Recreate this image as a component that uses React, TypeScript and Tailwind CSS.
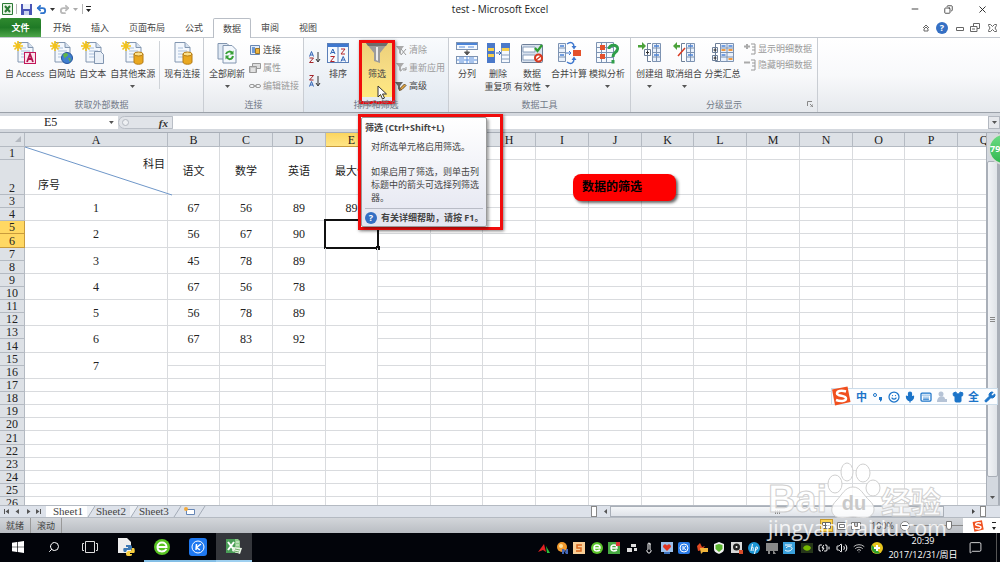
import React from 'react';
import {
  Mic,
  Smile,
  Keyboard,
  Shirt,
  Wrench,
  Search,
  Minus,
  Copy,
  X,
  Undo2,
  Redo2,
  Thermometer,
  Volume2,
  Wifi,
  MessageSquare,
  BatteryCharging,
} from 'lucide-react';

const ribbonTabs = ['开始', '插入', '页面布局', '公式', '数据', '审阅', '视图'];

const columns = [
  { name: 'A', width: 'w-[143px]' },
  { name: 'B', width: 'w-[52px]' },
  { name: 'C', width: 'w-[53px]' },
  { name: 'D', width: 'w-[53px]' },
  { name: 'E', width: 'w-[52px]' },
  { name: 'F', width: 'w-[53px]' },
  { name: 'G', width: 'w-[52px]' },
  { name: 'H', width: 'w-[53px]' },
  { name: 'I', width: 'w-[53px]' },
  { name: 'J', width: 'w-[53px]' },
  { name: 'K', width: 'w-[52px]' },
  { name: 'L', width: 'w-[53px]' },
  { name: 'M', width: 'w-[53px]' },
  { name: 'N', width: 'w-[53px]' },
  { name: 'O', width: 'w-[52px]' },
  { name: 'P', width: 'w-[53px]' },
  { name: 'Q', width: 'w-[53px]' },
];

// each score line covers two sheet rows, starting at row 3
const scores = [
  ['1', '67', '56', '89', '89'],
  ['2', '56', '67', '90', ''],
  ['3', '45', '78', '89', ''],
  ['4', '67', '56', '78', ''],
  ['5', '56', '78', '89', ''],
  ['6', '67', '83', '92', ''],
  ['7', '', '', '', ''],
];

const rowNumbers = Array.from({ length: 26 }, (_, i) => i + 1);

function Caret({ className = 'text-[#555]' }: { className?: string }) {
  return (
    <svg className={className} width="5" height="3" viewBox="0 0 5 3">
      <path d="M0 0h5L2.5 3z" fill="currentColor" />
    </svg>
  );
}

function Page() {
  return (
    <>
      <path d="M5 1.500h10l5 5V21H5z" fill="#f4f8fd" stroke="#8296b0" />
      <path d="M15 1.500v5h5" fill="#d5e1ef" stroke="#8296b0" />
      <path d="M8 7h5M8 10h9M8 13h9M8 16h9" stroke="#a9bfdc" />
    </>
  );
}

function Spark() {
  return (
    <path
      d="M5 0v10M0 5h10M1.500 1.500l7 7M8.500 1.500l-7 7"
      stroke="#f2c21b"
      strokeWidth="1.600"
    />
  );
}

function Drum() {
  return (
    <>
      <path d="M13 13v8c0 3 9 3 9 0v-8z" fill="#e9a820" stroke="#b57a12" />
      <ellipse cx="17.500" cy="13" rx="4.500" ry="2" fill="#fbe08a" stroke="#b57a12" />
    </>
  );
}

function Grid({ x, y, w, h }: { x: number; y: number; w: number; h: number }) {
  return (
    <path
      d={`M${x} ${y}h${w}v${h}h${-w}zM${x} ${y + h / 4}h${w}M${x} ${y + h / 2}h${w}M${x} ${y + (h * 3) / 4}h${w}M${x + w / 2} ${y}v${h}`}
      fill="#eaf1fb"
      stroke="#7d93b2"
    />
  );
}

function RibbonIcon({ name }: { name: string }) {
  return (
    <svg className="shrink-0" width="24" height="24" viewBox="0 0 24 24" fill="none">
      {name === 'access' && (
        <>
          <Page />
          <Spark />
          <rect x="11.500" y="11.500" width="11" height="11" fill="#fbe3ec" stroke="#c2185b" />
          <path d="M14 21l3-8 3 8M15 18h4" stroke="#b3124f" strokeWidth="1.800" />
        </>
      )}
      {name === 'web' && (
        <>
          <Page />
          <Spark />
          <circle cx="17" cy="17" r="5.500" fill="#3f7fd0" stroke="#24539a" />
          <path d="M13 14c2-3 5-2 5 0s-3 1-3 4zM18 17c3-1 3 1 2 4z" fill="#5fb548" />
        </>
      )}
      {name === 'text' && (
        <>
          <Page />
          <Spark />
          <path d="M13.500 10.500h6l3 3v9h-9z" fill="#e9eff7" stroke="#8296b0" />
        </>
      )}
      {name === 'other' && (
        <>
          <Page />
          <Spark />
          <Drum />
        </>
      )}
      {name === 'existing' && (
        <>
          <Page />
          <Drum />
        </>
      )}
      {name === 'refresh' && (
        <>
          <path d="M3 2.500h9l3 3V18H3z" fill="#dfe8f3" stroke="#8296b0" />
          <path d="M8 4.500h9l4 4V22H8z" fill="#f4f8fd" stroke="#8296b0" />
          <path d="M11 13c1-3 5-3 6-1M18 15c-1 4-5 4-6 1" stroke="#38a036" strokeWidth="2" />
          <path d="M18.500 9.500v4h-4zM10.500 18.500v-4h4z" fill="#38a036" />
        </>
      )}
      {name === 'sort' && (
        <>
          <rect x="1.500" y="2.500" width="21" height="19" fill="#f5f9fe" stroke="#5a7fb8" />
          <path d="M2 3h20v3H2z" fill="#3f78cf" />
          <path d="M12 6v15" stroke="#5a7fb8" />
          <path d="M4.500 13l2.300-5 2.200 5M5.500 11.500h3M15 20.500l2.200-5 2.300 5M15.500 19h3" stroke="#2e62b5" />
          <path d="M4.500 15.500h4l-4 5h4M15 8h4l-4 5h4" stroke="#b3262b" />
        </>
      )}
      {name === 'filter' && (
        <>
          <path d="M1 2h22l-8 10v10l-6-2v-8z" fill="#9b9b9b" />
          <path d="M1 2h22l-2 3H3z" fill="#6d6d6d" />
          <path d="M11 6h2v14l-2-1z" fill="#ececec" />
        </>
      )}
      {name === 'split' && (
        <>
          <rect x="1.500" y="1.500" width="21" height="7" fill="#f5f9fe" stroke="#7d93b2" />
          <path d="M2 2h20v2H2z" fill="#4b83d6" />
          <path d="M4 6h6M13 6h6" stroke="#5b8fdd" />
          <path d="M12 9v3M9.500 11h5L12 14z" fill="#555" stroke="#555" />
          <rect x="1.500" y="15.500" width="21" height="7" fill="#f5f9fe" stroke="#7d93b2" />
          <path d="M12 15v8M2 19h20M4 17h5M14 17h5M4 21h5M14 21h5" stroke="#5b8fdd" />
        </>
      )}
      {name === 'dedupe' && (
        <>
          <path d="M1 2h8v20H1z" fill="#4b79c9" />
          <path d="M2 7h6v3H2zM2 13h6v3H2z" fill="#f7cf4c" />
          <path d="M10 12h5M13 10l2 2-2 2" stroke="#2e62b5" />
          <rect x="15.500" y="2.500" width="8" height="19" fill="#f5f9fe" stroke="#8aa0bd" />
          <path d="M15 2h9v5h-9z" fill="#4b79c9" />
          <path d="M16 7h7v3h-7z" fill="#f7cf4c" />
          <path d="M16 14h7M16 18h7" stroke="#8aa0bd" />
        </>
      )}
      {name === 'validate' && (
        <>
          <rect x="1.500" y="3.500" width="21" height="18" rx="1" fill="#d7e0ec" stroke="#6d7f98" />
          <path d="M3 6h12v5H3zM3 14h12v5H3z" fill="#fff" stroke="#8aa0bd" />
          <path d="M15 7l2.500 3L22 4" stroke="#2f9e2f" strokeWidth="2.200" />
          <circle cx="18.500" cy="17" r="3.500" fill="#fff" stroke="#d9391f" strokeWidth="2" />
          <path d="M16 19l5-4" stroke="#d9391f" strokeWidth="1.500" />
        </>
      )}
      {name === 'consolidate' && (
        <>
          <path d="M1.500 2.500h7v18h-7zM1.500 7h7M1.500 11.500h7M1.500 16h7" fill="#eaf1fb" stroke="#7d93b2" />
          <path d="M3 5h4M3 14h4" stroke="#4b83d6" strokeWidth="1.500" />
          <path d="M9 12h5M12 10l2 2-2 2" stroke="#3f78cf" />
          <path d="M16 9h8v6h-8z" fill="#e4512b" />
          <path d="M10 3c4-3 7-1 7 3M10 21c4 3 7 1 7-3" stroke="#3f78cf" strokeWidth="1.500" />
          <path d="M14.500 5h5L17 8.500zM14.500 19h5L17 15.500z" fill="#3f78cf" />
        </>
      )}
      {name === 'whatif' && (
        <>
          <path d="M1.500 1.500h17v20h-17zM1.500 6.500h17M1.500 11.500h17M1.500 16.500h17M6.500 1.500v20M11.500 1.500v20" fill="#f5f9fe" stroke="#7d93b2" />
          <path d="M5 4h5v5H5zM5 13h5v5H5z" fill="#e4512b" />
          <path d="M14 8c0-5 9-5 8.500 0-.5 4-4.500 3-4.500 8M18 19v3.500" stroke="#2f9e4a" strokeWidth="3" />
        </>
      )}
      {name === 'group' && (
        <>
          <Grid x={14.5} y={2.5} w={8} h={18} />
          <path d="M16 5h5M16 14h5" stroke="#4b83d6" strokeWidth="1.500" />
          <path d="M13 2.500H9.500v18H13M6.500 8.500h6v6h-6z" fill="#fff" stroke="#6d7f98" />
          <path d="M8 11.500h3M9.500 10v3" stroke="#333" />
          <path d="M0 4h4V1l4 4-4 4V6.500H0z" fill="#4ba23a" />
        </>
      )}
      {name === 'ungroup' && (
        <>
          <Grid x={14.5} y={2.5} w={8} h={18} />
          <path d="M16 5h5M16 14h5" stroke="#4b83d6" strokeWidth="1.500" />
          <path d="M13 2.500H9.500v18H13" stroke="#6d7f98" />
          <path d="M6 15l7-8" stroke="#d9391f" strokeWidth="1.500" />
          <path d="M8 4H5V1L1 5l4 4V6.500h3z" fill="#4ba23a" />
        </>
      )}
      {name === 'subtotal' && (
        <>
          <Grid x={9.5} y={2.5} w={13} h={18} />
          <path d="M10.500 5h4M17.500 5h4M10.500 14h4" stroke="#4b83d6" strokeWidth="1.500" />
          <path d="M10.500 9h4M17.500 9h4M17.500 18h4" stroke="#f09a3e" strokeWidth="2" />
          <path d="M9 2.500H4.500v18H9M1.500 6.500h5v5h-5zM1.500 14.500h5v5h-5z" fill="#fff" stroke="#6d7f98" />
          <path d="M2.500 9h3M4 7.500v3M2.500 17h3M4 15.500v3" stroke="#333" />
        </>
      )}
    </svg>
  );
}

interface IBigButtonProps {
  icon: string;
  label: string;
  second?: string;
  arrow?: boolean;
  className?: string;
}

function BigButton({ icon, label, second, arrow, className = '' }: IBigButtonProps) {
  return (
    <button
      type="button"
      className={`flex shrink-0 flex-col items-center px-[2px] whitespace-nowrap ${className}`}
    >
      <RibbonIcon name={icon} />
      <span className="mt-[2px] leading-[13px]">{label}</span>
      <span className="flex h-[13px] items-center gap-1 leading-[13px]">
        {second}
        {arrow && <Caret />}
      </span>
    </button>
  );
}

function SmallIcon({ name }: { name: string }) {
  return (
    <svg className="shrink-0" width="12" height="12" viewBox="0 0 12 12" fill="none">
      {name === 'link' && (
        <>
          <path d="M1.500 1.500h9v9h-9z" fill="#e4edf8" stroke="#6787b3" />
          <path d="M3 3h3v6H3z" fill="#6f9ad6" />
          <path d="M6.500 4.500h4v5h-4z" fill="#f0b43c" stroke="#9f7625" />
        </>
      )}
      {name === 'props' && (
        <>
          <path d="M3.500 1.500h8v5h-8z" fill="#ddd" stroke="#999" />
          <path d="M.5 4.500h7v6h-7z" fill="#c4c4c4" stroke="#999" />
          <path d="M2 7h4M2 9h4" stroke="#fff" />
        </>
      )}
      {name === 'chain' && (
        <>
          <rect x=".5" y="4.500" width="5" height="3" rx="1.500" stroke="#999" />
          <rect x="6.500" y="4.500" width="5" height="3" rx="1.500" stroke="#999" />
          <path d="M4 6h4" stroke="#999" />
        </>
      )}
      {name === 'clear' && (
        <>
          <path d="M1 2h8L6 6v5L4 9V6z" fill="#aaa" />
          <path d="M6 5l5 6M11 5l-5 6" stroke="#999" />
        </>
      )}
      {name === 'reapply' && (
        <>
          <path d="M1 1h8L6 5v5L4 8V5z" fill="#aaa" />
          <path d="M6 9c1-3 4-3 5-1M11 5v3H8" stroke="#999" />
        </>
      )}
      {name === 'advanced' && (
        <>
          <path d="M0 2h8L5 6v5L3 9V6z" fill="#666" />
          <path d="M4.500 10.500l1-2.500 4-4 1.500 1.500-4 4z" fill="#e9a83d" stroke="#6b5330" />
        </>
      )}
      {name === 'show' && (
        <>
          <path d="M0 3.500h6M3 1v5" stroke="#aaa" strokeWidth="2" />
          <path d="M7 1h4v10H7M8 4h3M8 7h3" stroke="#999" />
        </>
      )}
      {name === 'hide' && (
        <>
          <path d="M0 3.500h6" stroke="#aaa" strokeWidth="2" />
          <path d="M7 1h4v10H7M8 4h3M8 7h3" stroke="#999" />
        </>
      )}
      {(name === 'asc' || name === 'desc') && (
        <>
          <path
            d={name === 'asc' ? 'M.5 5.500L2.500.500l2 5M1.200 4h2.600' : 'M.5 11.500l2-5 2 5M1.200 10h2.600'}
            stroke="#2e62b5"
          />
          <path d={name === 'asc' ? 'M.5 7h4l-4 4.500h4' : 'M.5.500h4L.5 5h4'} stroke="#a3262b" />
          <path d="M9 1v9M7 8l2 3 2-3" stroke="#333" />
        </>
      )}
    </svg>
  );
}

interface ISmallButtonProps {
  icon: string;
  label: string;
  disabled?: boolean;
  dense?: boolean;
}

function SmallButton({ icon, label, disabled, dense }: ISmallButtonProps) {
  return (
    <button
      type="button"
      disabled={disabled}
      className={`flex items-center gap-[2px] whitespace-nowrap disabled:text-[#9a9a9a] ${
        dense ? 'h-4' : 'h-[18px]'
      }`}
    >
      <SmallIcon name={icon} />
      {label}
    </button>
  );
}

interface IGroupProps {
  label: string;
  className: string;
  children: React.ReactNode;
  launcher?: boolean;
}

function Group({ label, className, children, launcher }: IGroupProps) {
  return (
    <section
      className={`flex shrink-0 flex-col justify-between border-r border-[#c9cdd3] ${className}`}
    >
      <div className="flex items-start pt-[3px]">{children}</div>
      <div className="relative h-[14px] text-center leading-[13px] text-[#737b88]">
        {label}
        {launcher && (
          <svg className="absolute top-[3px] right-1" width="6" height="6" viewBox="0 0 6 6">
            <path d="M.5 5V.5H5M3 3l3 3M6 3v3H3" fill="none" stroke="#888" />
          </svg>
        )}
      </div>
    </section>
  );
}

function TitleBar() {
  return (
    <header className="relative flex h-[18px] shrink-0 items-center bg-white">
      <div className="flex items-center gap-[3px] pl-[2px]">
        <svg width="11" height="12" viewBox="0 0 11 12">
          <path d="M.5.500h10v11H.5z" fill="#e7f3e4" stroke="#2b7a35" />
          <path d="M3 3l5 6M8 3L3 9" stroke="#2b7a35" strokeWidth="2" />
        </svg>
        <span className="h-[10px] w-px bg-[#b5b5b5]" />
        <button type="button" aria-label="保存" className="ml-px">
          <svg width="11" height="11" viewBox="0 0 11 11">
            <path d="M0 0h11v11H0z" fill="#4a55b5" />
            <path d="M2 0h7v5H2z" fill="#e9effa" />
            <path d="M3 7h5v4H3z" fill="#cbd3ee" />
          </svg>
        </button>
        <button type="button" aria-label="撤消" className="ml-px flex items-center gap-[3px]">
          <Undo2 className="h-[11px] w-[11px] text-[#2f74cc]" strokeWidth={4} />
          <Caret className="text-[#333]" />
        </button>
        <button type="button" aria-label="恢复" className="ml-px flex items-center gap-[3px]">
          <Redo2 className="h-[11px] w-[11px] text-[#b9b9b9]" strokeWidth={4} />
          <Caret className="text-[#aaa]" />
        </button>
        <span className="ml-px h-[10px] w-px bg-[#b5b5b5]" />
        <svg className="text-[#222]" width="5" height="6" viewBox="0 0 5 6" fill="currentColor">
          <path d="M0 0h5v1H0zM0 3h5L2.500 6z" />
        </svg>
      </div>
      <h1 className="absolute inset-x-0 text-center text-[10px] leading-[18px] text-[#222]">
        test - Microsoft Excel
      </h1>
      <div className="relative ml-auto flex items-center gap-6 pr-3 text-[#222]">
        <button type="button" aria-label="最小化">
          <Minus className="h-[10px] w-[10px]" />
        </button>
        <button type="button" aria-label="还原">
          <Copy className="h-[9px] w-[9px] -scale-x-100" />
        </button>
        <button type="button" aria-label="关闭">
          <X className="h-[11px] w-[11px]" />
        </button>
      </div>
    </header>
  );
}

function TabStrip() {
  return (
    <nav className="flex h-5 shrink-0 items-stretch border-b border-[#c3c8cf] bg-white text-[9px]">
      <button
        type="button"
        className="mr-[2px] w-[41px] rounded-t-[2px] bg-linear-to-b from-[#2f8a2f] via-[#1f7a26] to-[#4da64a] font-semibold text-white"
      >
        文件
      </button>
      {ribbonTabs.map((tab) => (
        <button
          type="button"
          key={tab}
          className={
            tab === '数据'
              ? '-mb-px rounded-t-[2px] border border-b-0 border-[#b9bec6] bg-white px-[9px] text-[#444]'
              : 'px-[10px] text-[#444]'
          }
        >
          {tab}
        </button>
      ))}
      <div className="ml-auto flex items-center gap-[6px] pr-[3px] text-[#666]">
        <svg width="8" height="8" viewBox="0 0 8 8" fill="none" stroke="currentColor">
          <path d="M1 4l3-3 3 3M2 7V5l2-2 2 2v2z" />
        </svg>
        <span className="flex h-3 w-3 items-center justify-center rounded-full bg-[#3570c4] text-[9px] leading-3 font-bold text-white">
          ?
        </span>
        <svg className="ml-[2px]" width="8" height="8" viewBox="0 0 8 8" fill="none" stroke="currentColor">
          <path d="M.5 3.500h7v3h-7z" />
        </svg>
        <svg width="10" height="9" viewBox="0 0 10 9" fill="none" stroke="currentColor">
          <path d="M3.500 3V.500h6v5H7M.5 3.500H7v5H.5zM2 6h3" />
        </svg>
        <svg className="ml-[2px]" width="9" height="8" viewBox="0 0 9 8" fill="none" stroke="currentColor">
          <path d="M.5.500h2l2 2 2-2h2v1L7 4l1.500 2.500v1h-2l-2-2-2 2h-2v-1L2 4 .5 1.500z" />
        </svg>
      </div>
    </nav>
  );
}

function Ribbon() {
  return (
    <div className="flex h-[75px] shrink-0 border-b border-[#9ba1a9] bg-linear-to-b from-white via-[#f8f9fb] to-[#e6e9ed] text-[9px] text-[#444]">
      <Group label="获取外部数据" className="w-[204px]">
        <div className="flex items-start pl-[3px]">
          <BigButton icon="access" label="自 Access" />
          <BigButton icon="web" label="自网站" />
          <BigButton icon="text" label="自文本" />
          <BigButton icon="other" label="自其他来源" arrow />
          <span className="mx-[2px] h-12 w-px bg-[#cfd3d8]" />
          <BigButton icon="existing" label="现有连接" />
        </div>
      </Group>
      <Group label="连接" className="w-[100px]">
        <BigButton icon="refresh" label="全部刷新" arrow className="ml-[3px]" />
        <div className="ml-[2px] flex flex-col">
          <SmallButton icon="link" label="连接" />
          <SmallButton icon="props" label="属性" disabled />
          <SmallButton icon="chain" label="编辑链接" disabled />
        </div>
      </Group>
      <Group label="排序和筛选" className="w-[145px] bg-linear-to-b from-[#f9fbfd] to-[#e0e7ef]">
        <div className="flex flex-col gap-3 pt-[10px] pl-[5px]">
          <button type="button" aria-label="升序" className="h-3">
            <SmallIcon name="asc" />
          </button>
          <button type="button" aria-label="降序" className="h-3">
            <SmallIcon name="desc" />
          </button>
        </div>
        <BigButton icon="sort" label="排序" className="ml-[3px] w-7" />
        <div className="relative ml-[9px] h-14 w-8 bg-linear-to-b from-[#eccf78] via-[#f6dc85] to-[#ffe97f]">
          <BigButton icon="filter" label="筛选" className="w-full" />
          <span className="absolute -inset-x-[2px] -top-px h-[64px] border-[3px] border-[#f10c0c] shadow-[1px_1px_3px_rgba(0,0,0,0.5)]" />
          <svg className="absolute top-11 left-4" width="11" height="16" viewBox="0 0 11 16">
            <path d="M1 1v11l2.500-2.500L5.500 14l2-1-2-4H9.500z" fill="#fff" stroke="#333" />
          </svg>
        </div>
        <div className="ml-[2px] flex flex-col">
          <SmallButton icon="clear" label="清除" disabled />
          <SmallButton icon="reapply" label="重新应用" disabled />
          <SmallButton icon="advanced" label="高级" />
        </div>
      </Group>
      <Group label="数据工具" className="w-[182px]">
        <div className="flex items-start pl-1">
          <BigButton icon="split" label="分列" className="w-7" />
          <BigButton icon="dedupe" label="删除" second="重复项" className="w-[34px]" />
          <BigButton icon="validate" label="数据" second="有效性" arrow className="w-[34px]" />
          <BigButton icon="consolidate" label="合并计算" />
          <BigButton icon="whatif" label="模拟分析" arrow className="w-9" />
        </div>
      </Group>
      <Group label="分级显示" className="w-[187px]" launcher>
        <div className="flex items-start pl-[3px]">
          <BigButton icon="group" label="创建组" arrow />
          <BigButton icon="ungroup" label="取消组合" arrow className="w-[38px]" />
          <BigButton icon="subtotal" label="分类汇总" className="w-[39px]" />
        </div>
        <div className="ml-[2px] flex flex-col">
          <SmallButton icon="show" label="显示明细数据" disabled dense />
          <SmallButton icon="hide" label="隐藏明细数据" disabled dense />
        </div>
      </Group>
    </div>
  );
}

function FormulaBar() {
  return (
    <div className="flex h-5 shrink-0 items-stretch border-b border-[#a7adb6] bg-[#d5d9df] py-[3px]">
      <div className="flex w-[118px] items-center bg-white pr-1">
        <input
          aria-label="名称框"
          defaultValue="E5"
          className="w-full min-w-0 bg-transparent pr-2 text-center font-['Liberation_Serif',serif] text-[12px] leading-[13px] text-[#222]"
        />
        <Caret />
      </div>
      <div className="flex w-[55px] items-center justify-between rounded-l-full border border-[#b9bec6] bg-[#e1e4e9] pr-1 pl-[3px]">
        <span className="h-[7px] w-[7px] rounded-full border border-[#b3b8c0] bg-[#eef0f3]" />
        <span className="font-['Liberation_Serif',serif] text-[11px] leading-[12px] font-bold text-[#333] italic">
          fx
        </span>
      </div>
      <input aria-label="编辑栏" className="min-w-0 flex-1 bg-white" />
      <button
        type="button"
        aria-label="展开编辑栏"
        className="flex w-3 items-center justify-center border border-[#b3b8c0] bg-[#e6e8ec]"
      >
        <Caret />
      </button>
    </div>
  );
}

function HeadCell() {
  return (
    <td rowSpan={2} className="relative border-r border-b border-[#d9dbde] p-0 text-[11px]">
      <div className="flex h-[46px] flex-col justify-between pr-[2px] pl-[13px]">
        <span className="mt-[9px] self-end leading-[14px]">科目</span>
        <span className="mb-[2px] self-start leading-[14px]">序号</span>
      </div>
      <svg className="absolute top-0 left-0 overflow-visible" width="143" height="48" fill="none">
        <path d="M0 0l147 48" stroke="#6f97c9" />
      </svg>
    </td>
  );
}

function Cell({ row, col }: { row: number; col: number }) {
  const line = 'border-r border-b border-[#d9dbde] p-0';
  if (col < 5 && row <= 2) {
    if (row === 2) return null;
    if (col === 0) return <HeadCell />;
    return (
      <td rowSpan={2} className={`${line} text-[11px]`}>
        {['', '语文', '数学', '英语', '最大值'][col]}
      </td>
    );
  }
  const merged = col < 5 && row <= 16 && !(row >= 15 && col >= 1 && col <= 3);
  if (!merged) return <td className={line} />;
  if (row % 2 === 0) return null;
  return (
    <td rowSpan={2} className={`relative ${line}`}>
      {scores[(row - 3) / 2][col]}
      {row === 5 && col === 4 && (
        <span className="absolute -inset-[2px] border-2 border-[#111]">
          <span className="absolute -right-[3px] -bottom-[3px] h-1 w-1 bg-[#111]" />
        </span>
      )}
    </td>
  );
}

function rowHeight(row: number) {
  if (row === 2) return 'h-[35px]';
  return row === 6 || row === 14 || row === 21 ? 'h-[14px]' : 'h-[13px]';
}

function Sheet() {
  return (
    <main className="flex min-h-0 flex-1 bg-white">
      <div className="min-w-0 flex-1 overflow-hidden">
        <table className="w-[1010px] table-fixed border-separate border-spacing-0 text-center font-['Liberation_Serif','Noto_Sans_CJK_SC',serif] text-[12px] leading-[12px] text-[#222]">
          <thead>
            <tr className="h-[14px]">
              <th className="w-[25px] border-r border-b border-[#b4bac2] bg-[#dde1e6] p-0">
                <svg className="ml-auto" width="10" height="9" viewBox="0 0 10 9">
                  <path d="M7 1v6H1z" fill="#b3b8bf" />
                </svg>
              </th>
              {columns.map((c) => (
                <th
                  key={c.name}
                  className={`${c.width} border-r border-b p-0 font-normal ${
                    c.name === 'E'
                      ? 'border-[#c89b3c] bg-linear-to-b from-[#fbd55f] to-[#ffe585]'
                      : 'border-[#b4bac2] bg-[#dde1e6]'
                  }`}
                >
                  {c.name}
                </th>
              ))}
            </tr>
          </thead>
          <tbody>
            {rowNumbers.map((row) => (
              <tr key={row} className={rowHeight(row)}>
                <th
                  className={`border-r border-b p-0 align-bottom font-normal ${
                    row === 5 || row === 6
                      ? 'border-[#c89b3c] bg-[#ffd863]'
                      : 'border-[#b4bac2] bg-[#dde1e6]'
                  }`}
                >
                  {row}
                </th>
                {columns.map((c, col) => (
                  <Cell key={c.name} row={row} col={col} />
                ))}
              </tr>
            ))}
          </tbody>
        </table>
      </div>
      <div className="flex w-[14px] shrink-0 flex-col border-r-2 border-l border-[#a9afb8] bg-[#d3d8df]">
        <span className="h-4 shrink-0" />
        <span className="flex h-3 items-center justify-center text-[#666]">
          <Caret className="rotate-180" />
        </span>
        <span className="flex flex-1 flex-col items-center justify-center gap-px rounded-[2px] border border-[#a9afb8] bg-linear-to-r from-[#f1f3f6] to-[#dfe3e8]">
          <span className="h-px w-[5px] bg-[#888]" />
          <span className="h-px w-[5px] bg-[#888]" />
          <span className="h-px w-[5px] bg-[#888]" />
        </span>
        <span className="flex h-7 items-center justify-center pt-3">
          <Caret />
        </span>
      </div>
    </main>
  );
}

function SheetTabs() {
  return (
    <div className="flex h-[13px] shrink-0 items-stretch border-y border-[#b4bac2] bg-[#dde2ea] font-['Liberation_Serif',serif] text-[11px] leading-[11px] text-[#444]">
      <svg className="w-[46px] shrink-0" viewBox="0 0 46 11" fill="#555">
        <path d="M4 3h1v5H4zM9 3v5L5.500 5.500zM19 3v5l-3.500-2.500zM27 3v5l3.500-2.500zM36 3v5l3.500-2.500zM40 3h1v5h-1z" />
      </svg>
      <button type="button" className="bg-white pr-1 pl-[7px]">
        Sheet1
      </button>
      {['Sheet2', 'Sheet3'].map((name) => (
        <button type="button" key={name} className="flex">
          <svg width="9" height="11" viewBox="0 0 9 11">
            <path d="M0 0h9L1 11H0z" fill="#fff" opacity=".5" />
            <path d="M8 0L1 11" stroke="#a3abb7" />
          </svg>
          <span className="pr-1">{name}</span>
        </button>
      ))}
      <button type="button" aria-label="插入工作表" className="flex">
        <svg width="34" height="11" viewBox="0 0 34 11" fill="none">
          <path d="M8 0L1 11M32 0l-7 11" stroke="#a3abb7" />
          <path d="M13.500 3.500h8v5h-8z" fill="#fff" stroke="#6686b5" />
          <circle cx="13" cy="3" r="2" fill="#f2a93b" />
        </svg>
      </button>
      <div className="ml-auto flex w-[409px] items-center">
        <span className="h-[11px] w-[6px] border border-[#888] bg-white" />
        <span className="ml-[6px] text-[#555]">
          <Caret className="rotate-90" />
        </span>
        <span className="ml-[2px] flex h-[11px] w-[334px] items-center justify-center gap-px border border-[#a9afb8] bg-linear-to-b from-[#f4f6f8] to-[#dfe3e9]">
          <span className="h-1 w-px bg-[#888]" />
          <span className="h-1 w-px bg-[#888]" />
          <span className="h-1 w-px bg-[#888]" />
        </span>
        <span className="ml-[27px] text-[#444]">
          <Caret className="-rotate-90" />
        </span>
        <span className="ml-1 h-[11px] w-[6px] border border-[#888] bg-white" />
      </div>
    </div>
  );
}

function StatusBar() {
  return (
    <footer className="relative flex h-[15px] shrink-0 items-center bg-linear-to-b from-[#d3d6da] to-[#b9bdc3] text-[9px] leading-[15px] text-[#444]">
      <span className="border-r border-[#999] px-[6px]">就绪</span>
      <span className="border-r border-[#999] px-[6px]">滚动</span>
      <div className="ml-auto flex items-center pr-[14px]">
        <button type="button" aria-label="普通" className="flex h-[13px] w-[13px] items-center justify-center border border-[#c79a2c] bg-[#fbd34f]">
          <svg width="9" height="7" viewBox="0 0 9 7" fill="#fff" stroke="#666">
            <path d="M.5.500h8v6h-8zM.5 3.500h8M3.500.500v6" />
          </svg>
        </button>
        <button type="button" aria-label="页面布局" className="ml-1">
          <svg width="10" height="8" viewBox="0 0 10 8" fill="#fff" stroke="#777">
            <path d="M.5.500h9v7h-9zM2.500 2.500h5v3h-5z" />
          </svg>
        </button>
        <button type="button" aria-label="分页预览" className="ml-1">
          <svg width="10" height="8" viewBox="0 0 10 8" fill="#fff" stroke="#777">
            <path d="M.5.500h9v7h-9zM3.500.500v4h3v-4" />
          </svg>
        </button>
        <span className="ml-[10px]">100%</span>
        <button type="button" aria-label="缩小" className="ml-[6px] flex h-[10px] w-[10px] items-center justify-center rounded-full border border-[#888] bg-white">
          <span className="h-px w-[6px] bg-[#555]" />
        </button>
        <input
          type="range"
          aria-label="显示比例"
          defaultValue={50}
          className="ml-[2px] h-px w-[74px] appearance-none bg-[#888] [&::-webkit-slider-thumb]:h-[9px] [&::-webkit-slider-thumb]:w-[6px] [&::-webkit-slider-thumb]:appearance-none [&::-webkit-slider-thumb]:rounded-b-[3px] [&::-webkit-slider-thumb]:border [&::-webkit-slider-thumb]:border-solid [&::-webkit-slider-thumb]:border-[#777] [&::-webkit-slider-thumb]:bg-white"
        />
      </div>
      <div className="absolute inset-y-0 right-0 flex w-[37px] items-center justify-between bg-white pr-1 pl-[9px]">
        <SogouLogo className="h-3 w-3" />
        <svg width="4" height="9" viewBox="0 0 4 9">
          <path d="M0 1h4v1H0zM0 6h4L2 9z" fill="#222" />
        </svg>
      </div>
    </footer>
  );
}

function SogouLogo({ className }: { className: string }) {
  return (
    <svg className={className} viewBox="0 0 20 20" fill="none">
      <path d="M1 3.500L16.500.500 19.500 16 4 19.500z" fill="#f0501f" />
      <path d="M15 5.500C10 4 6 5 6 7.500c0 3 9 1.500 9 5 0 3-6 3-10 1.500" stroke="#fff" strokeWidth="2.500" />
    </svg>
  );
}

function TrayIcon({ name }: { name: string }) {
  return (
    <svg className="shrink-0" width="12" height="12" viewBox="0 0 12 12" fill="none">
      {name === 'peak' && (
        <>
          <path d="M0 10l6-8 2 8-3-2z" fill="#e32222" />
          <path d="M8 4l4 7H9z" fill="#2bbf3a" />
        </>
      )}
      {name === 'ball' && (
        <>
          <circle cx="6" cy="5" r="5" fill="#f29a2e" />
          <circle cx="5" cy="4" r="2" fill="#ffdf9a" />
          <path d="M6 12V7h2l2 3V7h2v5h-2L8 9v3z" fill="#4467b8" />
        </>
      )}
      {name === 's' && (
        <>
          <path d="M0 0h12v12H0z" fill="#f9cf97" />
          <path d="M9 3H4v3h4v3H3" stroke="#d9661b" strokeWidth="1.500" />
        </>
      )}
      {(name === 'e' || name === 'wechat') && (
        <>
          {name === 'wechat' ? (
            <path d="M0 0h12v12H0z" fill="#46a942" />
          ) : (
            <circle cx="6" cy="6" r="6" fill="#5bc32b" />
          )}
          <path d="M3 6h6c0-4-6-4-6 0s4 3 6 2" stroke="#fff" strokeWidth="1.500" />
          {name === 'wechat' && <path d="M8 0h4v4H8z" fill="#d33" />}
        </>
      )}
      {name === 'net' && <path d="M1 6h5v4H1zM5 2h5v3H5zM8 6h3v3H8z" fill="#ddd" />}
      {name === 'heart' && (
        <>
          <path d="M0 0h12v10H0z" fill="#9dc0ea" />
          <path d="M6 9L2 5c0-4 4-3 4-1 0-2 4-3 4 1z" fill="#e0331f" />
          <path d="M3 10h6v2H3z" fill="#3e74c0" />
        </>
      )}
      {name === 'k' && (
        <>
          <rect width="12" height="12" rx="2" fill="#2a7be8" />
          <circle cx="6" cy="6" r="4" stroke="#fff" />
          <path d="M5 4v4M8 4L5.500 6 8 8" stroke="#fff" />
        </>
      )}
      {name === 'plug' && (
        <>
          <path d="M1 4l3-3 2 4 3-1-3 4-4 1z" fill="#e24a22" />
          <path d="M4 6h8v4H7l-2 2z" fill="#f0b53c" />
        </>
      )}
      {name === 'shield' && (
        <>
          <path d="M6 0l5 2v5c0 3-3 4-5 5-2-1-5-2-5-5V2z" fill="#f2f2f2" />
          <path d="M6 2l3.500 1v4L6 10 2.500 7V3z" fill="#5ab52f" />
        </>
      )}
      {name === 'disc' && (
        <>
          <path d="M0 0h11v11H0z" fill="#d8d8d8" />
          <circle cx="5.500" cy="5" r="3.500" fill="#222" />
          <circle cx="5.500" cy="5" r="1" fill="#fff" />
          <path d="M8 8h4v4H8z" fill="#d84c2a" />
        </>
      )}
      {name === 'hp' && (
        <>
          <circle cx="6" cy="6" r="6" fill="#1c95d4" />
          <path d="M4.500 2L3 9M3.500 6c2-2 2 0 1.500 3M8 5L6.500 12M8 5c3-1 1 4-1 3" stroke="#fff" />
        </>
      )}
      {name === 'dev' && <path d="M0 1h12v8H8l2 3H7V9H4v3H2V9H0z" fill="#888" />}
      {name === 'blue' && (
        <>
          <path d="M0 0h12v12H0z" fill="#3aa0dc" />
          <path d="M2 3h7M3 6c2-3 7-1 6 1s-5 3-7 1" stroke="#fff" />
        </>
      )}
      {name === 'nv' && (
        <>
          <path d="M0 1h12v10H0z" fill="#26361a" />
          <path d="M2 6c2-4 7-3 8 0-1 3-6 4-8 0z" fill="#76b900" />
        </>
      )}
      {name === 'guard' && (
        <>
          <circle cx="6" cy="6" r="6" fill="#e8c51c" />
          <path d="M1 3a6 6 0 0 0 8 8z" fill="#2fa02f" />
          <path d="M6 3v6M3 6h6" stroke="#fff" strokeWidth="2" />
        </>
      )}
    </svg>
  );
}

const trayStart = ['peak', 'ball', 's', 'e', 'wechat', 'net'];
const trayMiddle = ['heart', 'k', 'plug', 'shield', 'disc', 'hp', 'dev', 'blue', 'nv'];

function Taskbar() {
  const app = 'flex w-9 items-center justify-center border-b-2';
  return (
    <div className="flex h-[29px] shrink-0 bg-[#02040a] text-white">
      <button type="button" aria-label="开始菜单" className={`${app} border-transparent`}>
        <svg width="12" height="12" viewBox="0 0 12 12" fill="#fff">
          <path d="M0 1.700L5 1v4.700H0zM5.700.900L12 0v5.700H5.700zM0 6.300h5V11l-5-.7zM5.700 6.300H12V12l-6.300-.9z" />
        </svg>
      </button>
      <button type="button" aria-label="搜索" className={`${app} border-transparent`}>
        <Search className="h-3 w-3 -scale-x-100" />
      </button>
      <button type="button" aria-label="任务视图" className={`${app} border-transparent`}>
        <svg width="16" height="12" viewBox="0 0 16 12" fill="none" stroke="#ddd">
          <path d="M3.500.500h9v11h-9zM2 2.500H.5v7H2M14 2.500h1.500v7H14" />
        </svg>
      </button>
      <button type="button" aria-label="Python" className={`${app} border-transparent`}>
        <svg width="18" height="18" viewBox="0 0 18 18">
          <path d="M1 0h9l4 4v11H1z" fill="#eee" />
          <path d="M9 7h4c2 0 2 1 2 4l-2 1h-3l-1 2H7c-1-1-1-4 0-4h4V9H9z" fill="#3c78b4" />
          <path d="M13 18h-2c-2 0-2-1-2-3l2-2h3l1-3h2c1 1 1 5 0 5h-4v1h2c0 1 0 2-2 2z" fill="#f7cf3f" />
        </svg>
      </button>
      <button type="button" aria-label="浏览器" className={`${app} border-[#84bfe6]`}>
        <svg width="18" height="18" viewBox="0 0 18 18" fill="none">
          <circle cx="9" cy="9" r="8" fill="#58c322" />
          <path d="M4.500 9h9c0-6-9-6-9 0s7 5 9 2" stroke="#fff" strokeWidth="2" />
        </svg>
      </button>
      <button type="button" aria-label="K" className={`${app} border-[#84bfe6]`}>
        <svg width="18" height="18" viewBox="0 0 18 18" fill="none" stroke="#fff">
          <rect width="18" height="18" rx="3" fill="#1e78f0" stroke="none" />
          <circle cx="9" cy="9" r="6" />
          <path d="M7.500 6L7 12M12 6L7.500 9.500 11 12" strokeWidth="1.500" />
        </svg>
      </button>
      <button type="button" aria-label="Excel" className={`${app} border-[#9fd0f0] bg-[#34363b]`}>
        <svg width="16" height="16" viewBox="0 0 16 16" fill="none">
          <path d="M0 0h12l2 2v12H0z" fill="#8cc98a" />
          <path d="M0 0h9v14H0z" fill="#4b9e58" />
          <path d="M2 3l6 8M8 3l-6 8" stroke="#fff" strokeWidth="2" />
          <path d="M10 3h3M10 6h3" stroke="#e7f3e3" />
          <path d="M7 8l9 1-2 6-8-3z" fill="#e7f3e3" />
          <path d="M9 10l5 1M8 12l5 1" stroke="#6fae68" />
        </svg>
      </button>
      <div className="ml-auto flex items-center">
        <div className="flex w-[345px] items-center justify-between">
          {trayStart.map((name) => (
            <TrayIcon key={name} name={name} />
          ))}
          <Thermometer className="h-3 w-3" />
          {trayMiddle.map((name) => (
            <TrayIcon key={name} name={name} />
          ))}
          <BatteryCharging className="h-3 w-3" />
          <Volume2 className="h-3 w-3" />
          <Wifi className="h-3 w-3 text-[#bbb]" />
          <TrayIcon name="guard" />
        </div>
        <div className="w-20 text-center text-[9px] leading-[14px] whitespace-nowrap">
          <div>20:39</div>
          <div>2017/12/31/周日</div>
        </div>
        <button type="button" aria-label="通知" className="mr-[14px] ml-[6px] self-center">
          <MessageSquare className="h-[13px] w-[13px]" strokeWidth={1.5} />
        </button>
        <span className="mr-[3px] w-px self-stretch bg-[#555]" />
      </div>
    </div>
  );
}

function FilterTip() {
  return (
    <div className="absolute top-[114px] left-[358px] h-[116px] w-[145px] border-[3px] border-[#f10c0c] text-[9px] text-[#444] shadow-[1px_1px_3px_rgba(0,0,0,0.5)]">
      <div
        role="tooltip"
        className="flex h-full w-[126px] flex-col rounded-[2px] border border-[#9a9a9a] bg-linear-to-b from-white to-[#e3e5f0] px-[3px] pt-[3px] whitespace-nowrap shadow-[2px_2px_3px_rgba(0,0,0,0.35)]"
      >
        <p className="leading-[13px] font-bold">筛选 (Ctrl+Shift+L)</p>
        <p className="mt-[6px] pl-[6px] leading-[13px]">对所选单元格启用筛选。</p>
        <p className="mt-3 pl-[6px] leading-[13px]">
          如果启用了筛选，则单击列
          <br />
          标题中的箭头可选择列筛选
          <br />
          器。
        </p>
        <p className="mt-auto flex h-[18px] items-center gap-1 border-t border-[#b9bcc6] leading-[13px] font-bold">
          <span className="flex h-3 w-3 shrink-0 items-center justify-center rounded-full bg-[#3570c4] text-white">
            ?
          </span>
          有关详细帮助，请按 F1。
        </p>
      </div>
    </div>
  );
}

function SogouBar() {
  return (
    <div className="absolute top-[388px] right-[2px] flex h-[17px] items-center gap-1 border border-[#cbdcea] bg-[#fbfdff] pr-px pl-6 text-[#1b74c9]">
      <SogouLogo className="absolute -top-[3px] -left-px h-5 w-5" />
      <span className="w-3 text-[11px] leading-[15px] font-bold">中</span>
      <svg width="12" height="12" viewBox="0 0 12 12" fill="none">
        <circle cx="3" cy="4" r="1.500" stroke="currentColor" />
        <path d="M7 6h3v3l-2 2V9H7z" fill="currentColor" />
      </svg>
      <Smile className="h-3 w-3" strokeWidth={2.5} />
      <Mic className="h-3 w-3 fill-current" strokeWidth={2.5} />
      <Keyboard className="h-3 w-3" strokeWidth={2.5} />
      <svg className="text-[#b5c3d6]" width="12" height="12" viewBox="0 0 12 12" fill="currentColor">
        <circle cx="5" cy="3" r="2.500" />
        <path d="M1 11c0-7 8-7 8-3h2v3z" />
      </svg>
      <Shirt className="h-3 w-3 fill-current" />
      <span className="w-3 text-[11px] leading-[15px] font-bold">全</span>
      <Wrench className="h-3 w-3 fill-current" />
    </div>
  );
}

function Watermark() {
  return (
    <div className="pointer-events-none absolute right-[54px] bottom-[24px] flex w-[178px] flex-col font-['Open_Sans','Noto_Sans_CJK_SC',sans-serif] text-white/80">
      <div className="flex h-[60px] items-end">
        <span className="w-[59px] font-['Liberation_Sans',sans-serif] text-[38px] leading-[38px] font-bold [-webkit-text-stroke:1px_#cfcfcf]">
          Bai
        </span>
        <div className="relative h-[58px] w-[54px] shrink-0">
          <svg width="54" height="58" viewBox="0 0 54 58" fill="#ffffffcc" stroke="#cfcfcf">
            <ellipse cx="8" cy="24" rx="7" ry="9" />
            <ellipse cx="20" cy="12" rx="6" ry="9" />
            <ellipse cx="36" cy="13" rx="7" ry="9" />
            <ellipse cx="46" cy="28" rx="7" ry="8" />
            <path d="M26 27c8 0 10 8 17 14 8 8 3 17-6 17-5 0-7-1-11-1s-6 1-11 1c-10 0-14-9-6-17 6-6 9-14 17-14z" />
          </svg>
          <span className="absolute inset-x-0 bottom-[4px] text-center font-['Liberation_Sans',sans-serif] text-[20px] leading-[22px] font-bold text-[#c9c9c9]">
            du
          </span>
        </div>
        <span className="text-[30px] leading-[32px] font-bold [-webkit-text-stroke:1px_#cfcfcf]">
          经验
        </span>
      </div>
      <span className="text-[21px] leading-5">jingyan.baidu.com</span>
    </div>
  );
}

export default function App() {
  return (
    <div className="relative flex h-screen min-h-[400px] flex-col overflow-hidden bg-white font-['Open_Sans','Noto_Sans_CJK_SC',sans-serif] text-[9px]">
      <TitleBar />
      <TabStrip />
      <Ribbon />
      <FormulaBar />
      <Sheet />
      <SheetTabs />
      <StatusBar />
      <Taskbar />
      <div className="absolute top-[174px] left-[573px] h-[27px] w-[103px] rounded-[8px] bg-[#fe0000] pl-[9px] text-[12px] leading-[26px] font-bold text-black shadow-[2px_2px_3px_rgba(0,0,0,0.6)]">
        数据的筛选
      </div>
      <FilterTip />
      <div className="absolute top-[133px] -right-5 h-8 w-8 rounded-full border-2 border-[#d7dbd8] bg-linear-to-b from-[#6bdc85] to-[#2fb84e] text-[9px] leading-7 font-bold text-white">
        79
      </div>
      <SogouBar />
      <Watermark />
    </div>
  );
}
